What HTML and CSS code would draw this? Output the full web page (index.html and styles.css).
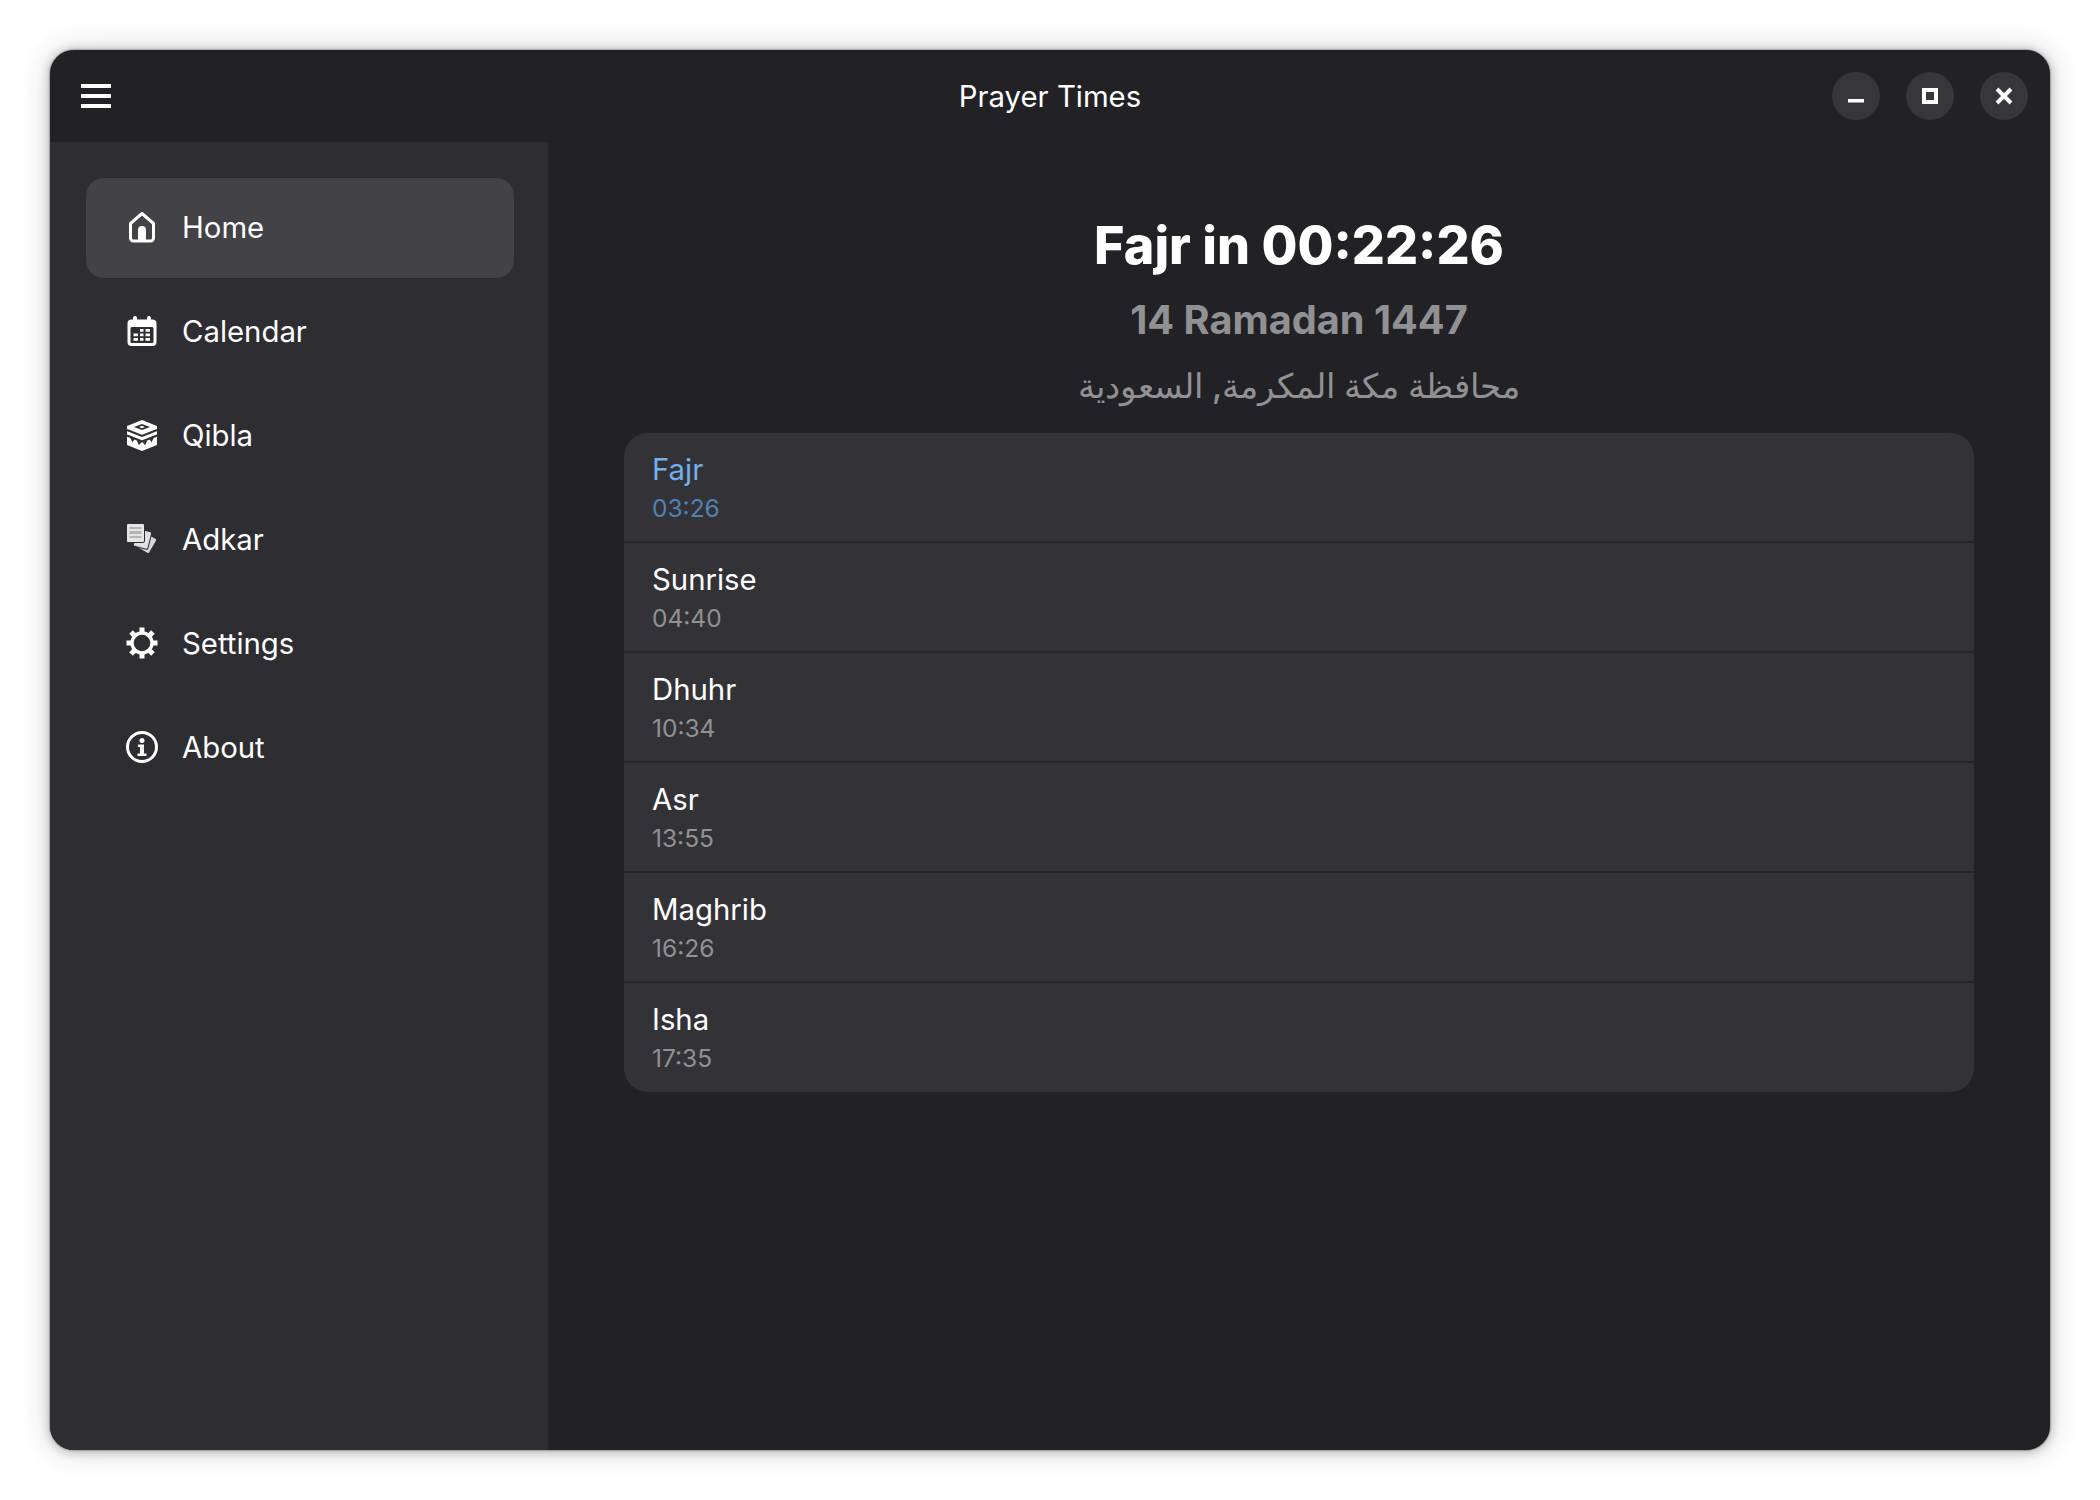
FILE: index.html
```html
<!DOCTYPE html>
<html lang="en">
<head>
  <meta charset="UTF-8" />
  <title>Prayer Times</title>
  <link rel="stylesheet" href="styles.css">
</head>
<body>
  <div class="shadow-clip">
    <div class="window">
      <header class="titlebar">
        <button class="menu-btn" aria-label="Menu">
          <svg viewBox="0 0 30 26" width="30" height="26"><path d="M0 1h30v4H0zM0 11h30v4H0zM0 21h30v4H0z" fill="#fff"/></svg>
        </button>
        <div class="app-title">Prayer Times</div>
        <div class="win-buttons">
          <button class="win-btn" aria-label="Minimize">
            <svg viewBox="0 0 20 20" width="20" height="20"><rect x="2" y="13" width="16" height="3.500" fill="#fff"/></svg>
          </button>
          <button class="win-btn" aria-label="Maximize">
            <svg viewBox="0 0 20 20" width="20" height="20"><path d="M2 2h16v16H2zM6 6v8h8V6z" fill="#fff" fill-rule="evenodd"/></svg>
          </button>
          <button class="win-btn" aria-label="Close">
            <svg viewBox="0 0 20 20" width="20" height="20"><path d="M3 3l14 14M17 3L3 17" stroke="#fff" stroke-width="4" fill="none"/></svg>
          </button>
        </div>
      </header>
      <div class="content">
        <nav class="sidebar">
          <a class="nav-item active">
            <svg class="nav-icon" viewBox="0 0 32 32"><path d="M16 2.500L27.500 12.500v14.500a3 3 0 0 1-3 3H7.500a3 3 0 0 1-3-3V12.500z" fill="none" stroke="#fff" stroke-width="3" stroke-linejoin="round"/><path d="M12 30V19a4 4 0 0 1 8 0v11z" fill="#fff"/></svg>
            <span>Home</span>
          </a>
          <a class="nav-item">
            <svg class="nav-icon" viewBox="0 0 32 32"><path d="M7 3a2 2 0 0 1 4 0v1.500h10V3a2 2 0 0 1 4 0v1.500h1.500a4 4 0 0 1 4 4V27a4 4 0 0 1-4 4h-21a4 4 0 0 1-4-4V8.500a4 4 0 0 1 4-4H7z" fill="#fff"/><rect x="4.500" y="12" width="23" height="16" rx="1.500" fill="#2e2e32"/><path d="M14 14h3.500v2.800H14zM19.500 14h4.500v2.800h-4.500zM7.500 18.500H12v2.800H7.500zM14 18.500h3.500v2.800H14zM19.500 18.500h4.500v2.800h-4.500zM7.500 23H12v2.800H7.500zM14 23h3.500v2.800H14zM19.500 23h4.500v2.800h-4.500z" fill="#fff"/></svg>
            <span>Calendar</span>
          </a>
          <a class="nav-item">
            <svg class="nav-icon" viewBox="0 0 32 32"><path d="M16 1l15 6v19l-15 6-15-6V7z" fill="#fff"/><path d="M16 5l8 3-8 3-8-3z" fill="#2e2e32"/><path d="M16 6.800l3 1.200-3 1.200-3-1.200z" fill="#fff"/><path d="M1 11l15 6 15-6" fill="none" stroke="#2e2e32" stroke-width="2"/><path d="M1 16.500l15 6 15-6" fill="none" stroke="#2e2e32" stroke-width="2"/><path d="M4 18.500l4.500 1.800-2 3zM10.500 21l5 2-2.500 3.200zM28 18.500l-4.500 1.800 2 3zM21.500 21l-5 2 2.500 3.200z" fill="#2e2e32"/></svg>
            <span>Qibla</span>
          </a>
          <a class="nav-item">
            <svg class="nav-icon" viewBox="0 0 32 32"><rect x="13" y="11.500" width="15" height="17" rx="1.500" transform="rotate(30 20.500 20)" fill="#d6d6d8" stroke="#2e2e32"/><rect x="9" y="7" width="15" height="18" rx="1.500" transform="rotate(14 16.500 16)" fill="#e0e0e2" stroke="#2e2e32"/><rect x=".5" y=".5" width="18" height="19" rx="1.500" fill="#e6e6e7" stroke="#2e2e32"/><path d="M3.500 4h12v2h-12zM3.500 8h12v3h-12zM3.500 13h12v2h-12z" fill="#b4b4b7"/></svg>
            <span>Adkar</span>
          </a>
          <a class="nav-item">
            <svg class="nav-icon" viewBox="0 0 32 32"><circle cx="16" cy="16" r="10" fill="none" stroke="#fff" stroke-width="3.400"/><g fill="#fff"><rect x="13.500" y="0.500" width="5" height="6.500"/><rect x="13.500" y="0.500" width="5" height="6.500" transform="rotate(45 16 16)"/><rect x="13.500" y="0.500" width="5" height="6.500" transform="rotate(90 16 16)"/><rect x="13.500" y="0.500" width="5" height="6.500" transform="rotate(135 16 16)"/><rect x="13.500" y="0.500" width="5" height="6.500" transform="rotate(180 16 16)"/><rect x="13.500" y="0.500" width="5" height="6.500" transform="rotate(225 16 16)"/><rect x="13.500" y="0.500" width="5" height="6.500" transform="rotate(270 16 16)"/><rect x="13.500" y="0.500" width="5" height="6.500" transform="rotate(315 16 16)"/></g></svg>
            <span>Settings</span>
          </a>
          <a class="nav-item">
            <svg class="nav-icon" viewBox="0 0 32 32"><circle cx="16" cy="16" r="14.500" fill="none" stroke="#fff" stroke-width="3"/><circle cx="16" cy="9.500" r="2.500" fill="#fff"/><path d="M12 13.500h6v9h2.500V25h-9v-2.500h2.500V16h-2z" fill="#fff"/></svg>
            <span>About</span>
          </a>
        </nav>
        <main class="main">
          <h1 class="countdown">Fajr in 00:22:26</h1>
          <h2 class="hijri">14 Ramadan 1447</h2>
          <div class="place">محافظة مكة المكرمة, السعودية</div>
          <ul class="times">
            <li class="time-row next"><div class="prayer">Fajr</div><div class="hour">03:26</div></li>
            <li class="time-row"><div class="prayer">Sunrise</div><div class="hour">04:40</div></li>
            <li class="time-row"><div class="prayer">Dhuhr</div><div class="hour">10:34</div></li>
            <li class="time-row"><div class="prayer">Asr</div><div class="hour">13:55</div></li>
            <li class="time-row"><div class="prayer">Maghrib</div><div class="hour">16:26</div></li>
            <li class="time-row"><div class="prayer">Isha</div><div class="hour">17:35</div></li>
          </ul>
        </main>
      </div>
    </div>
  </div>
</body>
</html>
```
FILE: styles.css
```css
:root {
  --window: #222226;
  --sidebar: #2e2e32;
  --selected: #424247;
  --card: #333337;
  --divider: #262629;
  --text: #fff;
  --muted: #919193;
  --accent: #74b0f0;
}
body {
  margin: 0;
  background: #fff;
  font-family: Inter, "Noto Sans", sans-serif;
  color: var(--text);
}
.shadow-clip {
  margin: 25px;
  width: 2050px;
  height: 1450px;
  padding: 25px;
  box-sizing: border-box;
  border-radius: 48px;
  overflow: hidden;
}
.window {
  width: 2000px;
  height: 1400px;
  display: flex;
  flex-direction: column;
  background: var(--window);
  border-radius: 24px;
  overflow: hidden;
  box-shadow: 0 0 2px rgba(0, 0, 0, 0.7), 0 1px 12px rgba(0, 0, 0, 0.3), 0 0 30px 8px rgba(0, 0, 0, 0.09);
}
.titlebar {
  height: 92px;
  flex: none;
  display: grid;
  grid-template-columns: 1fr auto 1fr;
  align-items: center;
  padding: 0 22px;
}
.menu-btn {
  background: none;
  border: none;
  padding: 0;
  margin-left: 9px;
  display: flex;
}
.app-title {
  font-size: 29.33px;
  font-weight: 400;
}
.win-buttons {
  display: flex;
  gap: 26px;
  justify-content: flex-end;
}
.win-btn {
  width: 48px;
  height: 48px;
  border: none;
  border-radius: 50%;
  background: #37373b;
  padding: 0;
  display: flex;
  align-items: center;
  justify-content: center;
}
.content {
  flex: 1;
  display: flex;
  min-height: 0;
}
.sidebar {
  width: 498px;
  flex: none;
  box-sizing: border-box;
  background: var(--sidebar);
  padding: 36px 34px 0 36px;
  display: flex;
  flex-direction: column;
  gap: 4px;
}
.nav-item {
  height: 100px;
  box-sizing: border-box;
  padding: 0 0 2px 40px;
  display: flex;
  align-items: center;
  gap: 24px;
  border-radius: 18px;
  font-size: 29.33px;
}
.nav-item.active { background: var(--selected); }
.nav-icon { width: 32px; height: 32px; flex: none; }
.main {
  flex: 1;
  padding: 0 76px;
  display: flex;
  flex-direction: column;
  align-items: center;
}
.countdown {
  margin: 0;
  padding-top: 71px;
  font-size: 52px;
  line-height: 66px;
  font-weight: 800;
}
.hijri {
  margin: 0;
  padding-top: 17px;
  font-size: 39.7px;
  line-height: 48px;
  font-weight: 700;
  color: var(--muted);
}
.place {
  padding-top: 20px;
  font-size: 33.8px;
  line-height: 44px;
  font-weight: 500;
  color: var(--muted);
}
.times {
  list-style: none;
  margin: 25px 0 0;
  padding: 0;
  width: 100%;
  background: var(--card);
  border-radius: 24px;
  overflow: hidden;
}
.time-row {
  height: 110px;
  box-sizing: border-box;
  padding: 18px 28px 0;
  border-bottom: 2px solid var(--divider);
}
.time-row:last-child { height: 109px; border-bottom: none; }
.prayer { font-size: 29.33px; line-height: 38px; }
.hour { font-size: 24.5px; line-height: 38px; color: var(--muted); }
.next .prayer { color: var(--accent); }
.next .hour { color: #5481b5; }
```
